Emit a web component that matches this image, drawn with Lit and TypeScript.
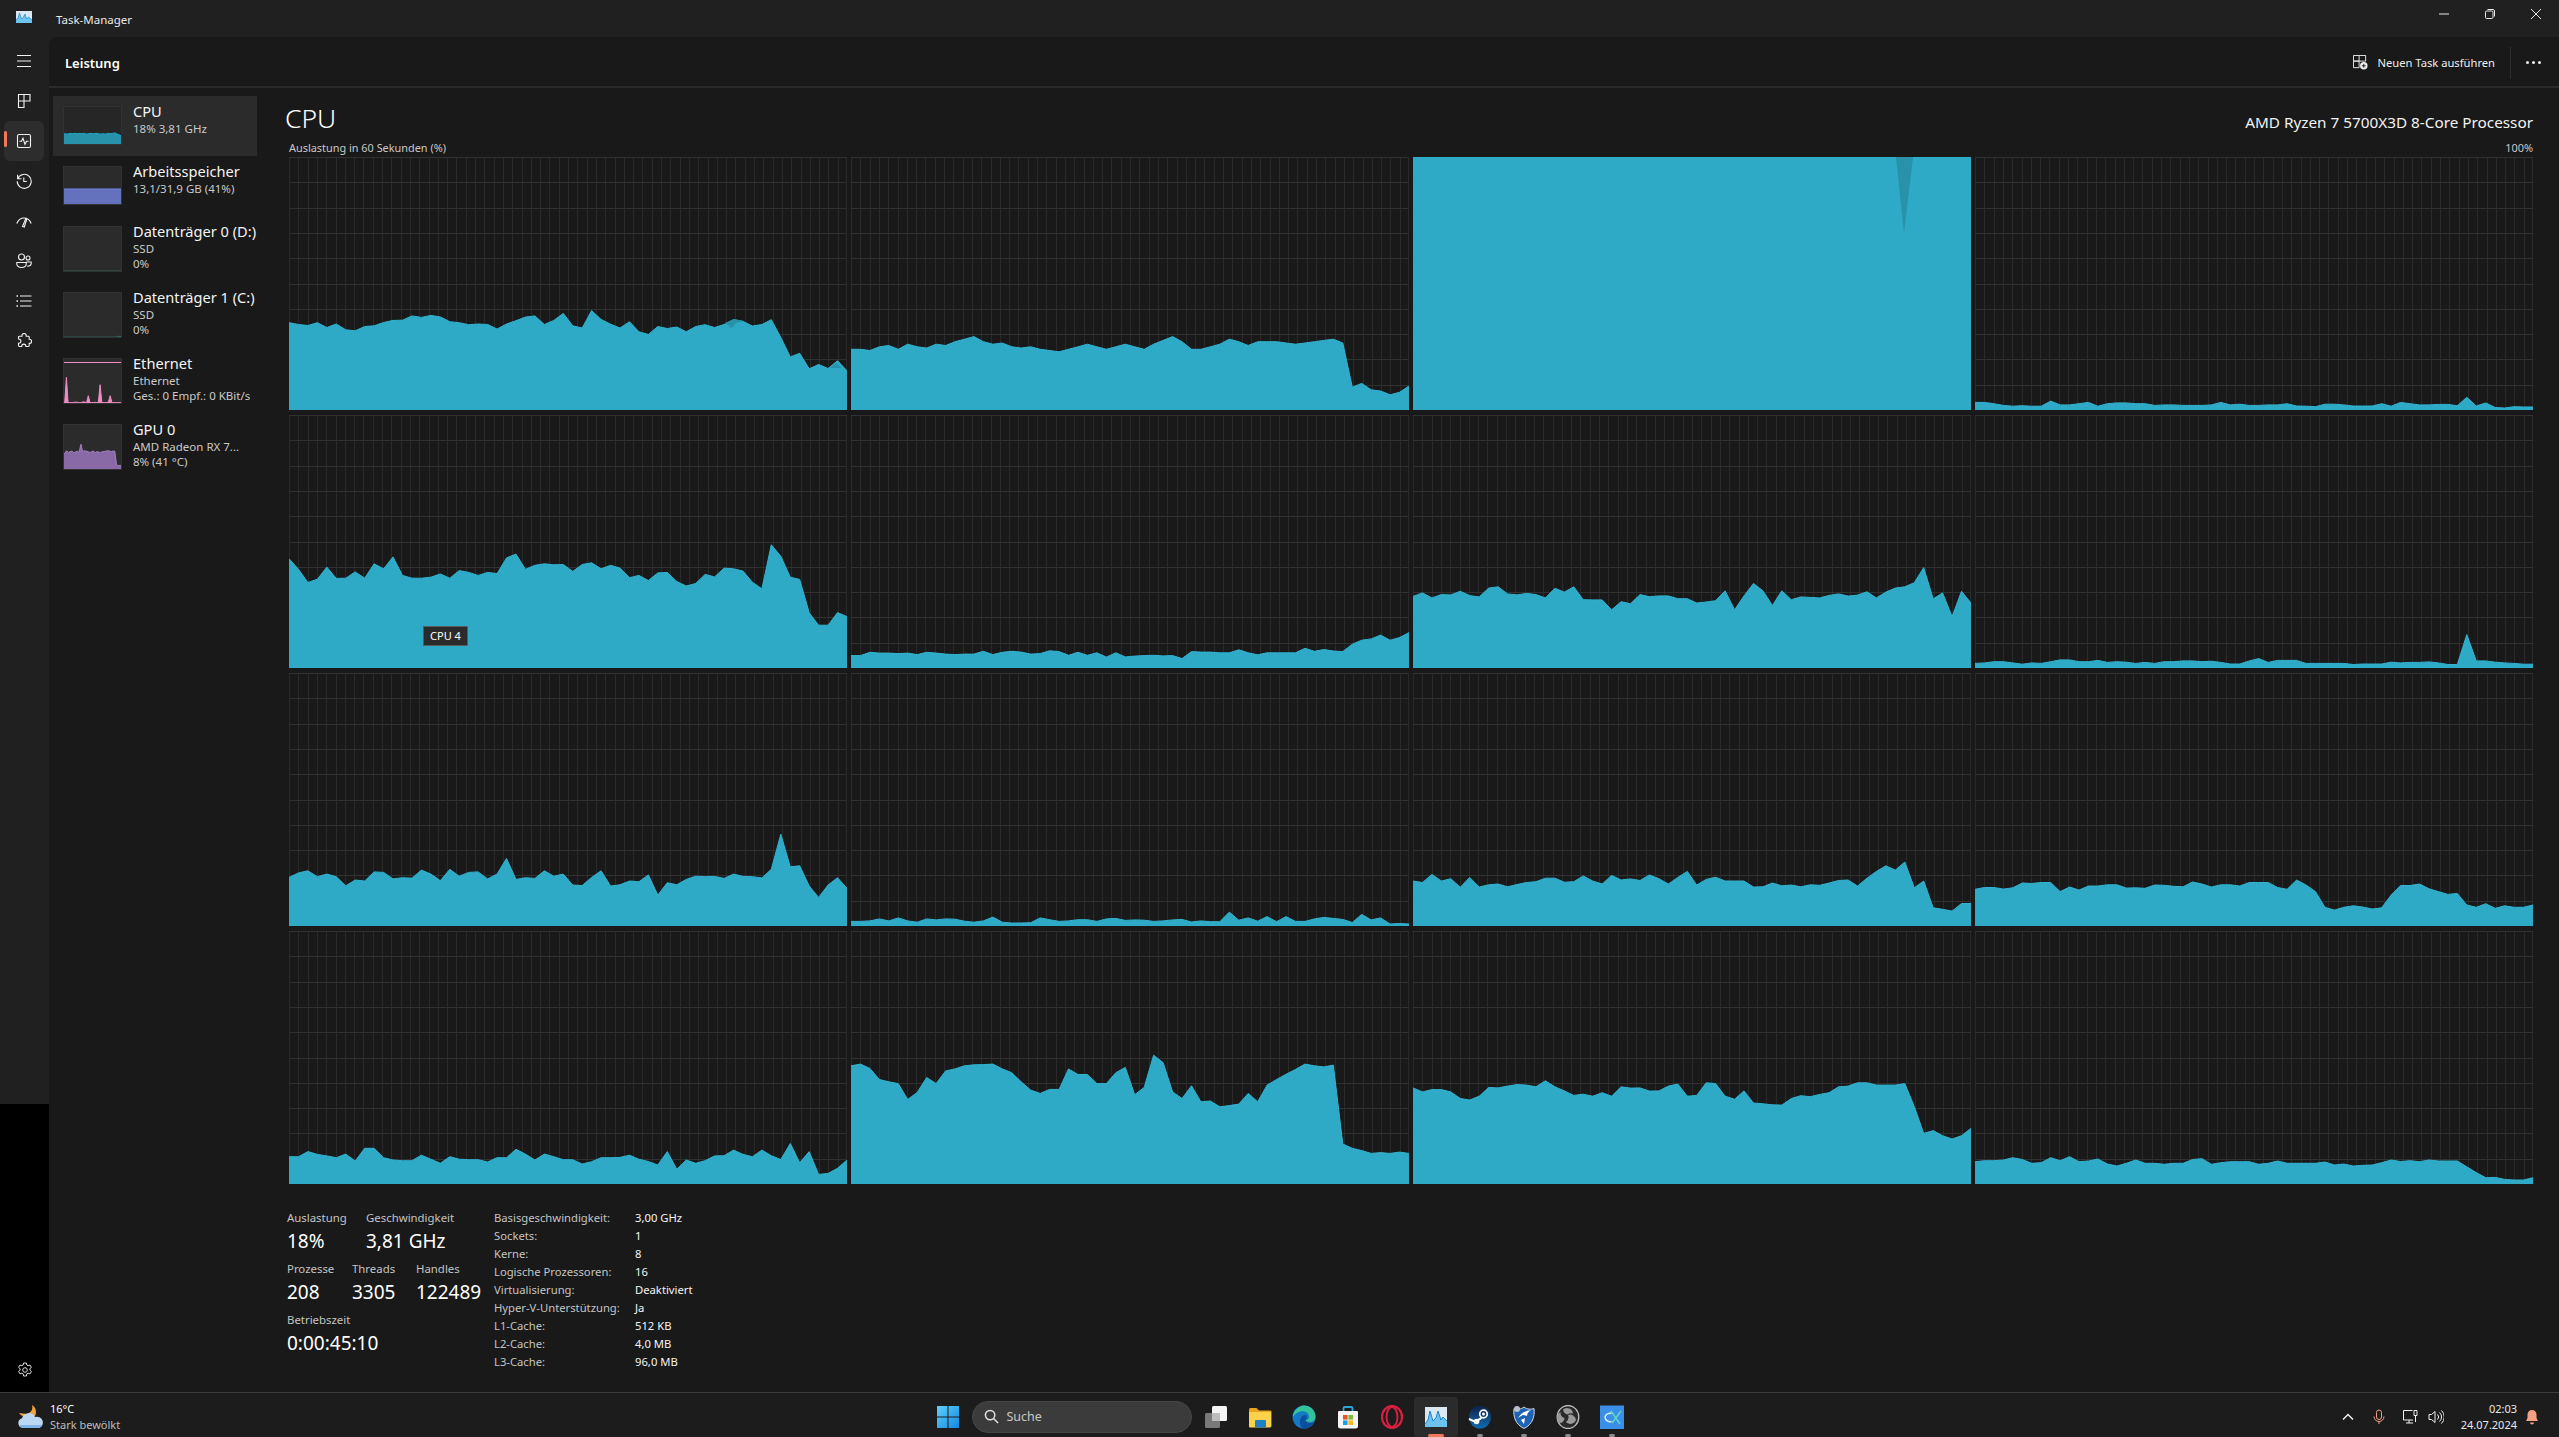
import { LitElement, css, html, svg } from "lit";
import { customElement, property } from "lit/decorators.js";

const W = 558;
const H = 253;

const area = (vals: number[], w: number, h: number) => {
  const pts = vals.map((v, i) => `${((i / (vals.length - 1)) * w).toFixed(1)},${(h - (v / 100) * h).toFixed(1)}`);
  return { line: `M${pts.join(" L")}`, fill: `M0,${h} L${pts.join(" L")} L${w},${h} Z` };
};

const full = Array.from({ length: 60 }, () => 100);

const CORES: { vals: number[]; shades?: string[]; tip?: string }[] = [
  {
    vals: [34.5,33.8,33.4,34.5,32.6,34,31.7,31.3,33,33.3,34.6,35.4,35.5,37.2,36.6,37.4,36.8,34.9,34.5,33.7,34,33.8,32,34,35.3,36.7,37.2,33.8,35.4,38.2,33.3,32.4,39.3,35.8,33.9,32.4,34.9,30.9,29.9,33,32.2,32.8,30.9,33,33.7,32.6,33.8,35.7,35,33.2,33.8,35.7,28.7,21,22.4,16.3,18,16.4,19.5,15.5],
    shades: ["436,166 445,162 455,164 447,166 443,171", "541,211 547,206 553,211"],
  },
  { vals: [24,24,23.5,25,25.5,24,26,25,24.5,26,25.5,27,28,29,27,26,26.5,25,24.5,25,24,23.5,23,24,25,26,25,24,25,26,25,24,26,27.5,29,27,24,24,25,26,28,27,25.5,27,27,27,26.5,26,26.5,27,27.5,28,26.5,9,10.5,8,7.5,6,7,9.5] },
  { vals: full, shades: ["483,0 500,0 491,76"] },
  { vals: [3,3,2.5,1.8,1.5,1.7,1.5,1.5,3.5,2,2,2.5,3,1.5,2.5,2.8,2.8,2.5,2.5,1.8,2,2,1.8,1.8,1.8,2,3,2,2.3,1.8,1.8,2,2,2.5,1.6,1.5,1.3,2.3,2.3,2,1.6,1.6,1.6,2.5,1.5,3,2.5,2,2,2.2,2.2,1.7,5,1.6,2.8,1,0.8,1.3,1.2,1.2] },
  {
    vals: [43.2,39,33.8,35.1,39.9,35.4,35.5,38,35.5,41.2,39.2,43.9,36.6,35.5,35.5,35.9,37.2,35.5,38.5,37.8,36.6,37.8,37.3,43.5,45,39,40.6,41.2,40.8,40.9,38.2,40.9,41.6,39.2,40.6,39.5,35.7,36.6,34.6,37.6,37.8,34.2,32.4,33.4,37,36,39.5,39.2,38.3,33.9,31.3,48.7,44.2,35.9,35,21.8,16.9,16.9,21.9,20.3],
    tip: "CPU 4",
  },
  { vals: [4.9,4.9,6.2,5.9,5.9,5.7,5.9,5.3,6.2,5.9,5.5,5.3,5.5,5.5,6.6,5.3,6.2,6.6,6.3,5.5,5.7,6.8,6.5,5,6.2,5,6,4.3,6,4.4,4.7,4.9,5,4.8,4.9,3.7,6.5,6.3,6.3,6,6,7.2,6,5.2,6,6,6,6,7.8,6.6,7.3,6.7,6.5,9.4,11,11.5,13,11,12,14] },
  { vals: [28.3,29.7,27.7,29,28.9,30.3,28.6,28.1,31.6,32.1,29.3,28.9,29.5,29,27.7,31.5,30,32.1,27,26.9,26.9,23,26.2,25.4,29,28.2,28.5,28.5,27.4,27.4,25.7,26.1,26.6,30.5,23,28.5,33.4,30.5,24.7,30.5,27,28.1,27.9,27.7,28.7,29.3,28.4,28.8,30.1,27.7,30,31.6,32.1,33.7,39.7,27.3,29.7,20.3,30.3,25.7] },
  { vals: [1.8,2,2.5,2.5,2,1.5,2,1.8,2.5,3.2,3.2,2.5,2.5,3,2.2,2.5,2.3,1.8,2.2,1.8,2.5,2.5,2.8,2.8,2.5,2.7,2.2,1.6,1.6,2.8,3.7,2.2,3,3,3,1.8,1.8,1.8,1.8,1.8,1.4,1.6,1.6,1.6,2.3,2,2.2,2.2,2.4,2,1.4,1.4,13.2,2.8,2.8,2.3,2,1.8,1.5,1.5] },
  { vals: [19.2,21,21.8,19.5,20.5,19.5,15.9,18.2,17.8,21.4,21.2,18.6,19.1,18.9,22.1,20.5,17.9,22.4,19.7,21.2,21.4,18.6,20.5,26.7,18.4,19.1,18.8,21.8,19.7,20.5,16.2,16,19.2,21.8,15.8,16.3,17.8,17.5,20.2,12.2,17.1,16.3,18.4,19.7,19.5,19.6,18.8,20.5,19.6,19.5,19,22.4,36.3,23.4,23.8,15.8,11.3,16.2,19.1,14.9] },
  { vals: [1.8,1.8,2,2.8,2,3.2,2,1.5,2.8,2.4,2.8,2.7,1.9,1.5,2,3.5,1.5,1.2,1.2,1.3,3.2,2.5,1.8,2,2.5,2.5,1.8,2.8,3,2.2,2.4,2.3,1.8,2,2.4,2.6,1.6,2,1.7,1.7,5.5,2.3,3.2,1.9,3.7,1.7,3.7,1.8,1.8,2.8,3.4,3,2.6,1.4,4.6,2.4,3.2,0.8,1,0.8] },
  { vals: [17.8,17.2,20.4,17.8,18.7,15.3,19.2,15.4,16.3,16.6,15.5,16.4,17.2,17.5,18.9,18.9,17.3,17.5,19.8,17.8,16.6,20,18.2,18.6,18,20.2,18.7,16.6,19.2,21.6,16.2,18.4,19.3,17.8,17.8,17.8,15.4,15.5,17,15.9,16.2,15.5,16.3,16.1,17,18,18.2,15.8,18.9,21.6,23.8,22.1,25.3,15.1,17.8,7.2,6.6,5.9,8.9,8.9] },
  { vals: [14.5,15.2,15.2,14.6,15.1,17,16.8,17.2,17.2,13.6,15.4,14.2,15.8,15.8,16.3,16.3,15,15.1,14.9,16.2,16.1,15.7,15.5,17.4,16.6,15.4,16.3,16.3,15.8,17.2,17.2,17.2,15.2,14.5,18.2,16.2,13.6,7.4,6.3,7.4,8,7.5,6.7,7.2,12.2,16,16,16.6,14.7,13.6,12.5,12.9,8.3,7.4,8.8,7,8,7.4,7.4,8.3] },
  { vals: [10.8,10.8,12.8,11.7,11.1,10.4,11.8,9.1,14.1,14.1,10.4,9.5,9.2,9.2,11.4,9.8,8.2,10.8,9.8,9.6,9.6,8.7,10.4,10.4,13.7,11.8,9.5,11.8,10.8,9.6,9.6,7.9,8.8,10.4,10.4,10.5,11.4,9.8,8.9,7.5,12.8,5.8,9.5,8.2,9.2,11.1,11.2,13.4,11.7,10.8,13.4,11.2,9.7,16,8.4,12.8,3.8,4.2,6.2,9.5] },
  { vals: [46.7,47.4,45.7,41.3,40.4,39.7,33.4,36.2,42.1,39.7,44.7,45.5,46.7,47.1,47.2,47.4,45.5,44,40.4,37.1,35.8,37.4,37.4,45.5,43.3,43.3,39.7,39.7,44,46.1,35.3,38.2,50.9,48,36.4,33.8,38.8,32.5,32.8,30.5,31,31.6,35.8,32.5,39.1,41.3,43.4,45.3,47.4,46.7,46.3,47,15.8,14.1,13.2,12.1,12.4,12.1,12.6,12.1] },
  { vals: [38,36.4,37.3,37.3,36.4,33.8,33.2,34.7,38.2,38,38.7,39.3,39.1,38.4,40.8,38.4,36.8,35,35.5,34.7,36.1,34.7,38.4,37.9,38,36.7,36.8,38.7,39.5,34.7,35,40,39.7,34.7,33.5,36.8,32,31.7,31.3,31.2,33.8,34.9,34.5,35.4,36.1,38.4,38.7,40,40,39.1,39.1,39.1,39.7,30.6,20,21.1,19.1,17.8,19.1,22] },
  { vals: [8.8,9.2,9.2,9.5,10.4,9.7,8.2,8.4,10.4,9.2,10.8,8.8,9.1,9.9,7.9,7.1,8.2,9.5,8.2,8.2,7.8,8.2,8.2,9.7,10,7.8,8.4,8.8,8.8,8.8,7.8,8.2,9.1,8.2,8.2,8.2,8.2,8.7,7.5,7.9,7.1,7.4,7.5,8.4,9.5,8.9,9.2,8.8,9.5,9.1,9.1,9.1,6.8,4.5,2.5,2.6,1.8,1.6,1.6,2.5] },
];

const SIDE = [
  { title: "CPU", lines: ["18%  3,81 GHz"], h: 39, fill: "#2792aa", stroke: "#1ba8c8", vals: [28,29,28,30,29,30,29,30,29,30,28,29,30,29,30,29,28,29,28,30,29,30,31,28,26,22], cls: "active" },
  { title: "Arbeitsspeicher", lines: ["13,1/31,9 GB (41%)"], h: 39, fill: "#6471bd", stroke: "#7386e8", vals: [41,41], cls: "" },
  { title: "Datenträger 0 (D:)", lines: ["SSD", "0%"], h: 46, fill: "#2b2b2b", stroke: "#2f6f6a", vals: [2,2], cls: "disk" },
  { title: "Datenträger 1 (C:)", lines: ["SSD", "0%"], h: 46, fill: "#2b2b2b", stroke: "#2f6f6a", vals: [2,2,2,2,2,2,2,2,2,2,2,2,2,2,2,2,2,2,2,4,2], cls: "disk" },
  { title: "Ethernet", lines: ["Ethernet", "Ges.: 0 Empf.: 0 KBit/s"], h: 46, fill: "#ee8cc4", stroke: "#ee8cc4", vals: [3,3,58,3,3,3,3,4,4,3,3,3,5,4,3,18,3,3,3,4,3,4,42,4,3,3,3,5,18,3,3,3,3,3,3,3], cls: "" },
  { title: "GPU 0", lines: ["AMD Radeon RX 7...", "8%  (41 °C)"], h: 46, fill: "#8a6aa6", stroke: "#a07fbd", vals: [38,36,42,38,40,41,38,39,41,38,56,40,42,41,40,38,40,41,38,40,39,38,40,40,41,42,41,40,41,41,10,10,10,10], cls: "" },
];

const navIcons = {
  menu: html`<svg viewBox="0 0 16 16"><path d="M1 2.500h14M1 8h14M1 13.500h14" /></svg>`,
  processes: html`<svg viewBox="0 0 16 16"><path d="M2.500 1.500h5.500v6.500h-5.500zM8 1.500h6v6.500h-6M2.500 8h5.500v6.500h-5.500z" /></svg>`,
  perf: html`<svg viewBox="0 0 16 16"><rect x="1.500" y="1.500" width="13" height="13" rx="1.500" /><path d="M3.500 8.300h2l1.500-3 2 6 1.500-3h2" /></svg>`,
  history: html`<svg viewBox="0 0 16 16"><path d="M1.800 5.500a7 7 0 1 1-.6 2.800M1.600 1.800v3.900h3.900M7.800 4.500v4h3" /></svg>`,
  startup: html`<svg viewBox="0 0 16 16"><path d="M.8 10.500c1.400-3.600 4-5.500 7.200-5.500s5.800 1.900 7.200 5.500M6.500 13.500l3.300-8 1 .5-2.500 8z" /></svg>`,
  users: html`<svg viewBox="0 0 16 16"><circle cx="5.500" cy="4" r="3" /><circle cx="12" cy="5" r="2" /><path d="M.8 9.500h9.400v1.500c0 2-2 3.500-4.700 3.500S.8 13 .8 11zM10.200 9h5v1.300c0 1.700-1.500 3-4 3" /></svg>`,
  details: html`<svg viewBox="0 0 16 16"><path d="M4 3h11.500M4 8h11.500M4 13h11.500" /><path class="heavy" d="M.5 3h1.500M.5 8h1.500M.5 13h1.500" /></svg>`,
  services: html`<svg viewBox="0 0 16 16"><path d="M6 2.600a2.100 2.100 0 0 1 4.200 0v.6h2.100a.9.900 0 0 1 .9.900v2.100h.3a2.100 2.100 0 0 1 0 4.200h-.3v2.200a.9.900 0 0 1-.9.900h-2.400v-.3a2.100 2.100 0 0 0-4.200 0v.3H3.400a.9.900 0 0 1-.9-.9v-2.400h.3a2.100 2.100 0 0 0 0-4.200h-.3V4.100a.9.900 0 0 1 .9-.9H6z" /></svg>`,
  gear: html`<svg class="thin" viewBox="0 0 16 16"><circle cx="8" cy="8" r="2.300" /><path d="M6.600 1h2.800l.4 2 1.300.7 1.900-.7 1.400 2.400-1.500 1.300v1.500l1.500 1.300-1.400 2.400-1.900-.7-1.300.7-.4 2.100H6.600l-.4-2.100-1.300-.7-1.900.7L1.600 9.500l1.500-1.300V6.700L1.600 5.400 3 3l1.900.7 1.300-.7z" /></svg>`,
};

const TASK_APPS = [
  { key: "view", svg: html`<svg viewBox="0 0 24 24"><rect x="8" y="1" width="15" height="15" rx="1.500" fill="#f4f4f4" /><rect x="1" y="8" width="15" height="15" rx="1.500" fill="#8a8a8a" fill-opacity=".85" /><rect x="8" y="8" width="8" height="8" fill="#bdbdbd" /></svg>` },
  { key: "files", svg: html`<svg viewBox="0 0 24 24"><path d="M1 4.500a1.500 1.500 0 0 1 1.500-1.500h6l2.500 2.500h11.500a1.500 1.500 0 0 1 1 1.500v14a1 1 0 0 1-1 1H2a1 1 0 0 1-1-1z" fill="#e9a51c" /><rect x="1" y="7" width="22" height="15.500" rx="1" fill="#fcd14b" /><rect x="7" y="15" width="11" height="7.500" rx="1" fill="#1d7fc4" /></svg>` },
  { key: "edge", svg: html`<svg viewBox="0 0 24 24"><circle cx="12" cy="12" r="11.500" fill="#1379c4" /><path d="M1 10C3 3 9 .5 12 .5c6 0 11.500 4.500 11.500 11 0 4-3 5.500-5.500 5.500-2 0-4-1-4.500-2 2 0 4-1.500 3.500-4C16.500 7 12 5.500 8.500 6.500 5 7.500 3 9 1 12z" fill="#32c39a" /><path d="M8 17c0-5 3-7.500 6-7 1.500 3 .5 5-1 5.500 1 2 5 4 9 1.500-2 4-6 6.500-10 6.500-2.500 0-4-3-4-6.500z" fill="#0c4f9e" /></svg>` },
  { key: "store", svg: html`<svg viewBox="0 0 24 24"><path d="M7.500 6V3.500a1.500 1.500 0 0 1 1.500-1.500h6a1.500 1.500 0 0 1 1.500 1.500V6" fill="none" stroke="#27a7e0" stroke-width="1.800" /><path d="M2 7a1 1 0 0 1 1-1h18a1 1 0 0 1 1 1v14a2.500 2.500 0 0 1-2.500 2.500h-15A2.500 2.500 0 0 1 2 21z" fill="#f4f4f4" /><rect x="7" y="10" width="4.600" height="4.600" fill="#e8532f" /><rect x="12.400" y="10" width="4.600" height="4.600" fill="#7cba3a" /><rect x="7" y="15.400" width="4.600" height="4.600" fill="#1ba1e8" /><rect x="12.400" y="15.400" width="4.600" height="4.600" fill="#fbb81c" /></svg>` },
  { key: "opera", svg: html`<svg viewBox="0 0 24 24"><ellipse cx="12" cy="12" rx="10" ry="11" fill="none" stroke="#d81f3f" stroke-width="2.200" /><ellipse cx="12" cy="12" rx="5.500" ry="10" fill="none" stroke="#d81f3f" stroke-width="2" /></svg>` },
  { key: "taskmgr", active: true, svg: html`<svg viewBox="0 0 24 24"><rect x="1" y="2" width="22" height="20" fill="#dbe8f2" /><path d="M1 19l3-4 2-9 3 10 3-3 2-7 3 9 2-3 4 4v6H1z" fill="#6cc4ef" /><path d="M1 19l3-4 2-9 3 10 3-3 2-7 3 9 2-3 4 4" fill="none" stroke="#1f84c8" stroke-width="1" /></svg>` },
  { key: "steam", dot: true, svg: html`<svg viewBox="0 0 24 24"><defs><linearGradient id="st" x1="0" y1="0" x2="0" y2="1"><stop offset="0" stop-color="#0f1f45" /><stop offset="1" stop-color="#0f6db0" /></linearGradient></defs><ellipse cx="12" cy="12" rx="11" ry="11.500" fill="url(#st)" /><circle cx="15.500" cy="9" r="3.800" fill="none" stroke="#fff" stroke-width="1.700" /><circle cx="15.500" cy="9" r="1.500" fill="#fff" /><path d="M1 14l6.500 2.800 6-4" stroke="#fff" stroke-width="2" fill="none" /><circle cx="8.500" cy="16.500" r="2.800" fill="#fff" /></svg>` },
  { key: "rocket", dot: true, svg: html`<svg viewBox="0 0 24 24"><path d="M2 3.500c3 1 7 1 10-1.500 3 2.500 7 2.500 10 1.500 1 8-1.500 16-10 20C3.500 19.500 1 11.500 2 3.500z" fill="#1e62b4" stroke="#cfd8e3" /><path d="M6 13c3-5 7-7 13-8-3 2-4 4-4 6l-3-1c-2 0-4 1.500-6 3zM9 15l4-2-1 6z" fill="#fff" /><circle cx="5" cy="4" r="3" fill="#b9c2cc" /></svg>` },
  { key: "obs", dot: true, svg: html`<svg viewBox="0 0 24 24"><ellipse cx="12" cy="12" rx="10.800" ry="11.500" fill="#2a2a2a" stroke="#bdbdbd" stroke-width="1.300" /><path d="M7 4.500a6 6 0 0 1 10 4 6 6 0 0 0-5.500 1 6 6 0 0 1-4.500-5zM20 15a6 6 0 0 1-10 2 6 6 0 0 0 2-7 6 6 0 0 1 8 5zM5 18a6 6 0 0 1-.5-11 6 6 0 0 0 4 6 6 6 0 0 1-3.500 5z" fill="#9a9a9a" /></svg>` },
  { key: "xsplit", dot: true, svg: html`<svg viewBox="0 0 24 24"><rect width="24" height="24" y=".5" fill="#3a8fe8" /><path d="M11.500 8.500a5 5 0 0 0-6.500 3.500 5 5 0 0 0 6.500 4.500" fill="none" stroke="#d8f0ff" stroke-width="1.500" /><path d="M11 6l9 13M21 6L12 18" stroke="#5fd6c8" stroke-width="1.500" /></svg>` },
];

@customElement("cpu-graph")
class CpuGraph extends LitElement {
  @property({ type: Array }) vals: number[] = [];
  @property({ type: Array }) shades: string[] = [];
  @property() tip = "";

  static styles = css`
    :host {
      display: block;
      position: relative;
      width: 558px;
      height: 253px;
    }
    svg {
      display: block;
    }
    .v {
      stroke: #2a2a2a;
    }
    .h {
      stroke: #313131;
    }
    .fill {
      fill: #2ea9c6;
    }
    .line {
      fill: none;
      stroke: #31b3d1;
      stroke-width: 1;
    }
    .shade {
      fill: #2792aa;
    }
    .tip {
      position: absolute;
      left: 134px;
      top: 211px;
      width: 45px;
      height: 20px;
      box-sizing: border-box;
      background: #2b2b2b;
      border: 1px solid #5a5a5a;
      color: #fff;
      font: 11px "Noto Sans", sans-serif;
      line-height: 18px;
      text-align: center;
    }
  `;

  render() {
    const { line, fill } = area(this.vals, W, H);
    const vs = Array.from({ length: 61 }, (_, i) => Math.min(Math.round((i * W) / 60), W - 1) + 0.5);
    const hs = Array.from({ length: 11 }, (_, i) => Math.min(Math.round((i * H) / 10), H - 1) + 0.5);
    return html`
      <svg width=${W} height=${H} viewBox="0 0 ${W} ${H}">
        <g shape-rendering="crispEdges">
          ${vs.map((x) => svg`<line class="v" x1=${x} x2=${x} y1="0" y2=${H}></line>`)}
          ${hs.map((y) => svg`<line class="h" x1="0" x2=${W} y1=${y} y2=${y}></line>`)}
        </g>
        <path class="fill" d=${fill}></path>
        <path class="line" d=${line}></path>
        ${this.shades.map((p) => svg`<polygon class="shade" points=${p}></polygon>`)}
      </svg>
      ${this.tip ? html`<div class="tip">${this.tip}</div>` : ""}
    `;
  }
}

@customElement("app-root")
class AppRoot extends LitElement {
  static styles = css`
    :host {
      display: block;
      width: 2559px;
      height: 1437px;
      overflow: hidden;
      background: #191919;
      color: #fff;
      font-family: "Noto Sans", "Open Sans", sans-serif;
      font-size: 11.500px;
    }
    .window {
      display: grid;
      grid-template-columns: 49px 1fr;
      grid-template-rows: 37px 1355px;
      height: 1392px;
      background: #202020;
    }
    .titlebar {
      grid-column: 1 / 3;
      display: flex;
      align-items: center;
      padding-left: 16px;
      background: #202020;
    }
    .app-icon {
      width: 16px;
      height: 12px;
      margin-top: -4px;
      margin-right: 24px;
    }
    .title {
      font-size: 11.500px;
      color: #e8e8e8;
      flex: 1;
      margin-top: 2px;
    }
    .winbtns {
      display: flex;
      margin-top: -9px;
    }
    .winbtns span {
      width: 46px;
      display: flex;
      justify-content: center;
    }
    .winbtns svg {
      width: 12px;
      height: 12px;
      fill: none;
      stroke: #e8e8e8;
    }
    .nav {
      display: flex;
      flex-direction: column;
      background: #000;
    }
    .nav-top {
      height: 1067px;
      background: #202020;
      padding-top: 4px;
      box-sizing: border-box;
    }
    .nav-bottom {
      flex: 1;
      display: flex;
      align-items: flex-end;
      justify-content: center;
      padding-bottom: 14px;
    }
    .nav-btn {
      position: relative;
      height: 40px;
      margin: 0 5px 0 4px;
      display: flex;
      align-items: center;
      justify-content: center;
      border-radius: 6px;
    }
    .nav-btn.on {
      background: #2d2d2d;
    }
    .nav-btn.on::before {
      content: "";
      position: absolute;
      left: 0;
      top: 10px;
      width: 3px;
      height: 16px;
      border-radius: 2px;
      background: #f2785a;
    }
    .nav svg {
      width: 16px;
      height: 16px;
      fill: none;
      stroke: #f2f2f2;
      stroke-width: 1.100;
    }
    .nav svg .heavy {
      stroke-width: 1.600;
    }
    .nav svg.thin {
      stroke-width: 0.900;
    }
    .main {
      background: #191919;
      border-top-left-radius: 8px;
      display: flex;
      flex-direction: column;
      min-height: 0;
    }
    .header {
      height: 51px;
      flex: none;
      box-sizing: border-box;
      padding: 2px 16px 0 16px;
      border-bottom: 2px solid #2a2a2a;
      display: flex;
      align-items: center;
    }
    .header h1 {
      flex: 1;
      margin: 0;
      font-size: 13px;
      font-weight: 600;
    }
    .newtask {
      display: flex;
      align-items: center;
      gap: 9px;
      font-size: 11.200px;
      color: #eee;
    }
    .newtask svg {
      width: 15px;
      height: 15px;
      fill: none;
      stroke: #eee;
    }
    .sep {
      width: 1px;
      height: 32px;
      background: #2d2d2d;
      margin: 0 15px 0 15px;
    }
    .dots {
      display: flex;
      gap: 3px;
      width: 17px;
    }
    .dots i {
      width: 3px;
      height: 3px;
      border-radius: 50%;
      background: #eee;
    }
    .body {
      display: flex;
      flex: 1;
      min-height: 0;
    }
    .side {
      width: 236px;
      flex: none;
      padding: 8px 0 0 4px;
      box-sizing: border-box;
    }
    .item {
      display: flex;
      width: 204px;
      height: 66px;
      box-sizing: border-box;
      padding: 10px 0 0 10px;
      white-space: nowrap;
    }
    .item.short {
      height: 60px;
    }
    .item.active {
      background: #2b2b2b;
    }
    .item svg {
      display: block;
      flex: none;
      margin-right: 11px;
      background: #2b2b2b;
      outline: 1px solid #323232;
      outline-offset: -1px;
    }
    .item.active svg {
      background: #262626;
    }
    .item b {
      display: block;
      font-weight: 400;
      font-size: 14.600px;
      line-height: 15px;
      margin-bottom: 2px;
      margin-top: -2px;
      color: #f4f4f4;
    }
    .item span {
      display: block;
      font-size: 11.500px;
      line-height: 15px;
      color: #c9c9c9;
    }
    .content {
      flex: 1;
      padding-right: 26px;
      min-width: 0;
    }
    .head-row {
      display: flex;
      justify-content: space-between;
      align-items: center;
      height: 49px;
      padding-top: 2px;
      box-sizing: border-box;
    }
    .head-row h2 {
      margin: 0;
      padding-top: 9px;
      font-size: 26.500px;
      font-weight: 300;
    }
    .head-row span {
      font-size: 15.300px;
      color: #f2f2f2;
      padding-top: 17px;
    }
    .sub-row {
      display: flex;
      justify-content: space-between;
      height: 20px;
      padding: 3px 0 0 4px;
      box-sizing: border-box;
      font-size: 10.900px;
      color: #c8c8c8;
    }
    .graphs {
      display: grid;
      grid-template-columns: repeat(4, 558px);
      grid-auto-rows: 253px;
      column-gap: 4px;
      row-gap: 5px;
      margin-left: 4px;
    }
    .stats {
      display: flex;
      padding: 26px 0 0 2px;
    }
    .left-stats {
      width: 207px;
      flex: none;
    }
    .stat-row {
      display: flex;
      height: 51px;
    }
    .stat label {
      display: block;
      height: 16px;
      line-height: 16px;
      font-size: 11.400px;
      color: #c4c4c4;
    }
    .stat div {
      height: 28px;
      line-height: 30px;
      font-size: 19px;
      color: #fff;
    }
    .w79 {
      width: 79px;
    }
    .w65 {
      width: 65px;
    }
    .w64 {
      width: 64px;
    }
    .facts {
      display: grid;
      grid-template-columns: 141px auto;
      grid-auto-rows: 18px;
      line-height: 18px;
      font-size: 11.250px;
      margin-top: -1px;
      color: #c4c4c4;
    }
    .facts em {
      font-style: normal;
      color: #f4f4f4;
    }
    .taskbar {
      height: 45px;
      box-sizing: border-box;
      border-top: 1px solid #3d3d3d;
      padding-top: 3px;
      background: #1c1c1c;
      display: grid;
      grid-template-columns: 1fr auto 1fr;
      align-items: center;
    }
    .weather {
      display: flex;
      align-items: center;
      gap: 6px;
      padding-left: 18px;
      line-height: 16px;
      font-size: 11px;
    }
    .weather svg {
      width: 26px;
      height: 26px;
    }
    .weather span {
      display: block;
      color: #bdbdbd;
    }
    .center {
      display: flex;
      align-items: center;
      height: 40px;
    }
    .tb {
      position: relative;
      width: 44px;
      height: 40px;
      display: flex;
      align-items: center;
      justify-content: center;
      border-radius: 4px;
      box-sizing: border-box;
    }
    .tb svg {
      width: 24px;
      height: 24px;
    }
    .tb.on {
      background: #2b2b2b;
    }
    .tb.on::after,
    .tb.dot::after {
      content: "";
      position: absolute;
      bottom: 0;
      left: 50%;
      height: 3px;
      border-radius: 2px;
      transform: translateX(-50%);
    }
    .tb.on::after {
      width: 16px;
      background: #f2785a;
    }
    .tb.dot::after {
      width: 6px;
      background: #8a8a8a;
    }
    .search {
      width: 220px;
      height: 32px;
      box-sizing: border-box;
      margin: 0 2px;
      border-radius: 16px;
      background: #3b3b3b;
      border: 1px solid #474747;
      display: flex;
      align-items: center;
      padding-left: 11px;
      gap: 8px;
      font-size: 12.500px;
      color: #c8c8c8;
    }
    .search svg {
      width: 15px;
      height: 15px;
      fill: none;
      stroke: #e0e0e0;
      stroke-width: 1.600;
    }
    .tray {
      display: flex;
      justify-content: flex-end;
      align-items: center;
      padding-right: 17px;
    }
    .tray svg {
      width: 16px;
      height: 16px;
      fill: none;
      stroke: #f0f0f0;
    }
    .cell {
      display: flex;
      justify-content: center;
      width: 31px;
    }
    .cell.narrow {
      width: 25px;
    }
    .cell.net {
      margin-left: 4px;
    }
    .clock {
      text-align: right;
      line-height: 16px;
      font-size: 11px;
      color: #e8e8e8;
      margin: 0 5px 0 9px;
      width: 60px;
    }
    .bell {
      width: 20px;
      display: flex;
      justify-content: center;
    }
  `;

  private renderSide() {
    return SIDE.map((s) => {
      const a = area(s.vals, 59, s.h);
      return html`
        <div class="item ${s.cls} ${s.lines.length === 1 ? "short" : ""}">
          <svg width="59" height=${s.h} viewBox="0 0 59 ${s.h}">
            <path d=${a.fill} fill=${s.fill}></path>
            <path d=${a.line} fill="none" stroke=${s.stroke}></path>
            ${s.title === "Ethernet"
              ? svg`<line x1="1" x2="58" y1="4.500" y2="4.500" stroke=${s.stroke}></line>`
              : ""}
          </svg>
          <div>
            <b>${s.title}</b>
            ${s.lines.map((l) => html`<span>${l}</span>`)}
          </div>
        </div>
      `;
    });
  }

  render() {
    return html`
      <div class="window">
        <div class="titlebar">
          <svg class="app-icon" viewBox="0 0 16 12">
            <rect width="16" height="12" fill="#dbe8f2"></rect>
            <path d="M0 9l2-2 1.500-5 2 6 2-2 1.500-3 1.500 5 2-2 3.500 3v3H0z" fill="#6cc4ef"></path>
            <path d="M0 9l2-2 1.500-5 2 6 2-2 1.500-3 1.500 5 2-2 3.500 3" fill="none" stroke="#1f84c8" stroke-width=".7"></path>
          </svg>
          <div class="title">Task-Manager</div>
          <div class="winbtns">
            <span><svg viewBox="0 0 12 12"><path d="M1 6h10"></path></svg></span>
            <span><svg viewBox="0 0 12 12"><rect x="1.500" y="3" width="7.500" height="7.500" rx="1.200"></rect><path d="M3.500 1.500h5.500a1.500 1.500 0 0 1 1.500 1.500v5.500"></path></svg></span>
            <span><svg viewBox="0 0 12 12"><path d="M1 1l10 10M11 1L1 11"></path></svg></span>
          </div>
        </div>

        <div class="nav">
          <div class="nav-top">
            <div class="nav-btn">${navIcons.menu}</div>
            <div class="nav-btn">${navIcons.processes}</div>
            <div class="nav-btn on">${navIcons.perf}</div>
            <div class="nav-btn">${navIcons.history}</div>
            <div class="nav-btn">${navIcons.startup}</div>
            <div class="nav-btn">${navIcons.users}</div>
            <div class="nav-btn">${navIcons.details}</div>
            <div class="nav-btn">${navIcons.services}</div>
          </div>
          <div class="nav-bottom">${navIcons.gear}</div>
        </div>

        <div class="main">
          <div class="header">
            <h1>Leistung</h1>
            <div class="newtask">
              <svg viewBox="0 0 16 16">
                <path d="M.5.5h6v6h-6zM6.500.5h7v6h-7M.5 6.500h6v7h-6z"></path>
                <circle cx="11.500" cy="11.500" r="4" fill="#eee" stroke="none"></circle>
                <path d="M11.500 9.500v4M9.500 11.500h4" stroke="#191919"></path>
              </svg>
              Neuen Task ausführen
            </div>
            <div class="sep"></div>
            <div class="dots"><i></i><i></i><i></i></div>
          </div>
          <div class="body">
            <div class="side">${this.renderSide()}</div>
            <div class="content">
              <div class="head-row">
                <h2>CPU</h2>
                <span>AMD Ryzen 7 5700X3D 8-Core Processor</span>
              </div>
              <div class="sub-row">
                <span>Auslastung in 60 Sekunden (%)</span>
                <span>100%</span>
              </div>
              <div class="graphs">
                ${CORES.map(
                  (c) => html`<cpu-graph .vals=${c.vals} .shades=${c.shades ?? []} .tip=${c.tip ?? ""}></cpu-graph>`
                )}
              </div>
              <div class="stats">
                <div class="left-stats">
                  <div class="stat-row">
                    <div class="stat w79"><label>Auslastung</label><div>18%</div></div>
                    <div class="stat"><label>Geschwindigkeit</label><div>3,81 GHz</div></div>
                  </div>
                  <div class="stat-row">
                    <div class="stat w65"><label>Prozesse</label><div>208</div></div>
                    <div class="stat w64"><label>Threads</label><div>3305</div></div>
                    <div class="stat"><label>Handles</label><div>122489</div></div>
                  </div>
                  <div class="stat-row">
                    <div class="stat"><label>Betriebszeit</label><div>0:00:45:10</div></div>
                  </div>
                </div>
                <div class="facts">
                  <span>Basisgeschwindigkeit:</span><em>3,00 GHz</em>
                  <span>Sockets:</span><em>1</em>
                  <span>Kerne:</span><em>8</em>
                  <span>Logische Prozessoren:</span><em>16</em>
                  <span>Virtualisierung:</span><em>Deaktiviert</em>
                  <span>Hyper-V-Unterstützung:</span><em>Ja</em>
                  <span>L1-Cache:</span><em>512 KB</em>
                  <span>L2-Cache:</span><em>4,0 MB</em>
                  <span>L3-Cache:</span><em>96,0 MB</em>
                </div>
              </div>
            </div>
          </div>
        </div>
      </div>

      <div class="taskbar">
        <div class="weather">
          <svg viewBox="0 0 26 26">
            <path d="M14 1c1 4 0 7-5 9L1 9c2 3 5 4 8 3h8c2-3 1-9-3-11z" fill="#f2a33a"></path>
            <path d="M5 24a5 5 0 0 1-1-9.800A7 7 0 0 1 17 13a5.500 5.500 0 0 1 4 11z" fill="#bcd7f2"></path>
            <path d="M5 24a5 5 0 0 1-3.500-3h23a5.500 5.500 0 0 1-3.500 3z" fill="#7fb2e6"></path>
          </svg>
          <div>16°C<span>Stark bewölkt</span></div>
        </div>
        <div class="center">
          <div class="tb">
            <svg viewBox="0 0 24 24">
              <defs>
                <linearGradient id="win" x1="0" y1="0" x2="1" y2="1">
                  <stop offset="0" stop-color="#5fd0fb"></stop>
                  <stop offset="1" stop-color="#1387e0"></stop>
                </linearGradient>
              </defs>
              <path d="M1 1h10.500v10.500H1zM12.500 1H23v10.500H12.500zM1 12.500h10.500V23H1zM12.500 12.500H23V23H12.500z" fill="url(#win)"></path>
            </svg>
          </div>
          <div class="search">
            <svg viewBox="0 0 16 16"><circle cx="6.500" cy="6.500" r="5"></circle><path d="M10.200 10.200l4.800 4.800"></path></svg>
            Suche
          </div>
          ${TASK_APPS.map(
            (a) => html`<div class="tb ${a.active ? "on" : ""} ${a.dot ? "dot" : ""}">${a.svg}</div>`
          )}
        </div>
        <div class="tray">
          <div class="cell"><svg viewBox="0 0 16 16" stroke-width="1.500"><path d="M3 10.500l5-5 5 5"></path></svg></div>
          <div class="cell">
            <svg viewBox="0 0 16 16">
              <rect x="5.500" y="1" width="5" height="9.500" rx="2.500" stroke="#f0a080"></rect>
              <path d="M3 7.500a5 5 0 0 0 10 0M8 12.500V15" stroke="#f0a080"></path>
            </svg>
          </div>
          <div class="cell narrow net">
            <svg viewBox="0 0 16 16"><path d="M10 11H.5V1.500h9M3 14h7M6 11v3M11 1.500h3v5h-3zM12.500 6.500V13"></path></svg>
          </div>
          <div class="cell narrow">
            <svg viewBox="0 0 16 16"><path d="M1 5.500h2.500L7 2.500v11l-3.500-3H1zM9.500 5.500a3.500 3.500 0 0 1 0 5M11.500 3.500a6 6 0 0 1 0 9M13.500 1.500a9 9 0 0 1 0 13"></path></svg>
          </div>
          <div class="clock">02:03<br />24.07.2024</div>
          <div class="bell">
            <svg viewBox="0 0 16 16"><path d="M8 1a4.500 4.500 0 0 0-4.500 4.500V9L2 12h12l-1.500-3V5.500A4.500 4.500 0 0 0 8 1zM6 13.500h4a2 2 0 0 1-4 0z" fill="#f5a183" stroke="none"></path></svg>
          </div>
        </div>
      </div>
    `;
  }
}
